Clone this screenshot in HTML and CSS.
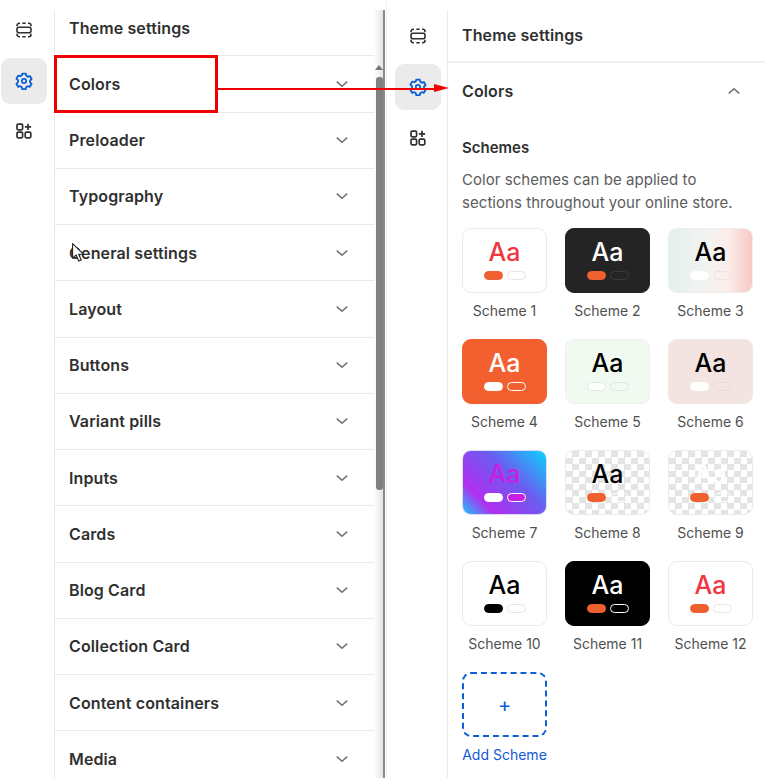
FILE: index.html
```html
<!DOCTYPE html>
<html lang="en">
<head>
    <meta charset="UTF-8">
    <meta name="viewport" content="width=device-width, initial-scale=1.0">
    <title>Theme settings</title>
    <link rel="stylesheet" href="styles.css">
</head>
<body>
    <svg class="defs" width="0" height="0">
        <symbol id="i-sections" viewBox="0 0 20 20">
            <rect x="3" y="7.2" width="14" height="5.6" rx="2" fill="none" stroke="currentColor" stroke-width="1.6"/>
            <path d="M3 6.2V5.5A2.2 2.2 0 0 1 5.2 3.3H6M8.3 3.3h3.4M14 3.3h.8A2.2 2.2 0 0 1 17 5.5v.7M3 13.8v.7a2.2 2.2 0 0 0 2.2 2.2H6M8.3 16.7h3.4M14 16.7h.8a2.2 2.2 0 0 0 2.2-2.2v-.7" fill="none" stroke="currentColor" stroke-width="1.6"/>
        </symbol>
        <symbol id="i-gear" viewBox="0 0 20 20">
            <circle cx="10" cy="10" r="2.2" fill="none" stroke="currentColor" stroke-width="1.7"/>
            <path d="M8.3 2.6h3.4l.6 2.2 1.4.8 2.2-.6 1.7 3-1.6 1.6v1.6l1.6 1.6-1.7 3-2.2-.6-1.4.8-.6 2.2H8.3l-.6-2.2-1.4-.8-2.2.6-1.7-3 1.6-1.6V9.2L2.4 7.6l1.7-3 2.2.6 1.4-.8z" fill="none" stroke="currentColor" stroke-width="1.8" stroke-linejoin="round"/>
        </symbol>
        <symbol id="i-apps" viewBox="0 0 20 20">
            <rect x="3" y="3.2" width="5.6" height="5.6" rx="1.2" fill="none" stroke="currentColor" stroke-width="1.7"/>
            <rect x="3" y="11.2" width="5.6" height="5.6" rx="1.2" fill="none" stroke="currentColor" stroke-width="1.7"/>
            <rect x="11.2" y="11.2" width="5.6" height="5.6" rx="1.2" fill="none" stroke="currentColor" stroke-width="1.7"/>
            <path d="M14 2.8v6.2M10.9 5.9h6.2" fill="none" stroke="currentColor" stroke-width="1.7"/>
        </symbol>
        <symbol id="i-down" viewBox="0 0 12 6">
            <path d="M.8.6 6 5.2 11.2.6" fill="none" stroke="currentColor" stroke-width="1.5"/>
        </symbol>
    </svg>

    <div class="shot">
        <section class="panel panel-left">
            <nav class="rail">
                <span class="rail-btn"><svg class="rail-icon"><use href="#i-sections"/></svg></span>
                <span class="rail-btn active"><svg class="rail-icon"><use href="#i-gear"/></svg></span>
                <span class="rail-btn"><svg class="rail-icon"><use href="#i-apps"/></svg></span>
            </nav>
            <div class="list">
                <h2 class="list-title">Theme settings</h2>
                <div class="row"><span>Colors</span><svg class="chev"><use href="#i-down"/></svg></div>
                <div class="row"><span>Preloader</span><svg class="chev"><use href="#i-down"/></svg></div>
                <div class="row"><span>Typography</span><svg class="chev"><use href="#i-down"/></svg></div>
                <div class="row"><span>General settings</span><svg class="chev"><use href="#i-down"/></svg></div>
                <div class="row"><span>Layout</span><svg class="chev"><use href="#i-down"/></svg></div>
                <div class="row"><span>Buttons</span><svg class="chev"><use href="#i-down"/></svg></div>
                <div class="row"><span>Variant pills</span><svg class="chev"><use href="#i-down"/></svg></div>
                <div class="row"><span>Inputs</span><svg class="chev"><use href="#i-down"/></svg></div>
                <div class="row"><span>Cards</span><svg class="chev"><use href="#i-down"/></svg></div>
                <div class="row"><span>Blog Card</span><svg class="chev"><use href="#i-down"/></svg></div>
                <div class="row"><span>Collection Card</span><svg class="chev"><use href="#i-down"/></svg></div>
                <div class="row"><span>Content containers</span><svg class="chev"><use href="#i-down"/></svg></div>
                <div class="row"><span>Media</span><svg class="chev"><use href="#i-down"/></svg></div>
            </div>
            <div class="scrollbar">
                <span class="scroll-arrow"></span>
                <span class="scroll-thumb"></span>
            </div>
        </section>

        <section class="panel panel-right">
            <nav class="rail">
                <span class="rail-btn"><svg class="rail-icon"><use href="#i-sections"/></svg></span>
                <span class="rail-btn active"><svg class="rail-icon"><use href="#i-gear"/></svg></span>
                <span class="rail-btn"><svg class="rail-icon"><use href="#i-apps"/></svg></span>
            </nav>
            <div class="detail">
                <h2 class="detail-title">Theme settings</h2>
                <div class="detail-head"><span>Colors</span><svg class="chev up"><use href="#i-down"/></svg></div>
                <div class="detail-body">
                    <h3 class="schemes-title">Schemes</h3>
                    <p class="schemes-text">Color schemes can be applied to sections throughout your online store.</p>
                    <div class="schemes">
                        <div class="scheme"><div class="swatch s1"><b>Aa</b><i class="pills"><u></u><u></u></i></div><span>Scheme 1</span></div>
                        <div class="scheme"><div class="swatch s2"><b>Aa</b><i class="pills"><u></u><u></u></i></div><span>Scheme 2</span></div>
                        <div class="scheme"><div class="swatch s3"><b>Aa</b><i class="pills"><u></u><u></u></i></div><span>Scheme 3</span></div>
                        <div class="scheme"><div class="swatch s4"><b>Aa</b><i class="pills"><u></u><u></u></i></div><span>Scheme 4</span></div>
                        <div class="scheme"><div class="swatch s5"><b>Aa</b><i class="pills"><u></u><u></u></i></div><span>Scheme 5</span></div>
                        <div class="scheme"><div class="swatch s6"><b>Aa</b><i class="pills"><u></u><u></u></i></div><span>Scheme 6</span></div>
                        <div class="scheme"><div class="swatch s7"><b>Aa</b><i class="pills"><u></u><u></u></i></div><span>Scheme 7</span></div>
                        <div class="scheme"><div class="swatch s8"><b>Aa</b><i class="pills"><u></u><u></u></i></div><span>Scheme 8</span></div>
                        <div class="scheme"><div class="swatch s9"><b>Aa</b><i class="pills"><u></u><u></u></i></div><span>Scheme 9</span></div>
                        <div class="scheme"><div class="swatch s10"><b>Aa</b><i class="pills"><u></u><u></u></i></div><span>Scheme 10</span></div>
                        <div class="scheme"><div class="swatch s11"><b>Aa</b><i class="pills"><u></u><u></u></i></div><span>Scheme 11</span></div>
                        <div class="scheme"><div class="swatch s12"><b>Aa</b><i class="pills"><u></u><u></u></i></div><span>Scheme 12</span></div>
                        <div class="scheme add"><div class="swatch add-box">+</div><span>Add Scheme</span></div>
                    </div>
                </div>
            </div>
        </section>

        <!-- annotation drawn over the screenshot -->
        <div class="callout"></div>
        <svg class="arrow" width="232" height="14" viewBox="0 0 232 14">
            <path d="M0 8H216" stroke="#f00000" stroke-width="2"/>
            <path d="M216 3l15 4-15 4z" fill="#f00000"/>
        </svg>
        <svg class="cursor" width="14" height="20" viewBox="0 0 14 20">
            <path d="M.6.6v14.6l3.6-3.2 2.5 6 2.5-1-2.5-5.8h4.8z" fill="#fff" stroke="#222" stroke-width="1.1" stroke-linejoin="round"/>
        </svg>
    </div>
</body>
</html>
```

FILE: styles.css
```css
* { box-sizing: border-box; }
body { margin: 0; background: #fff; font-family: Inter, "Liberation Sans", sans-serif; color: #303030; }
.defs { position: absolute; }
.shot { position: relative; display: flex; width: 780px; height: 784px; overflow: hidden; }

.panel { display: flex; height: 778px; overflow: hidden; }
.panel-left { width: 385px; }
.panel-right { width: 379px; margin-left: 1px; padding-top: 10px; border-left: 1px solid #f1f1f1; }

.rail { display: flex; flex-direction: column; gap: 4.6px; flex: none; border-right: 1px solid #ebebeb; }
.panel-left .rail { width: 55px; margin-top: 10px; padding: 0 0 0 1px; }
.panel-right .rail { width: 61px; padding: 3px 0 0 8px; gap: 5px; }
.rail-btn { display: flex; align-items: center; justify-content: center; width: 46px; height: 46px; border-radius: 9px; color: #303030; }
.panel-left .rail-btn:first-child { margin-top: -3px; }
.rail-btn.active { background: #ebebeb; color: #0a5fd6; }
.rail-icon { width: 20px; height: 20px; }

.list { width: 319px; flex: none; }
.list-title { margin: 0; height: 56.3px; padding-top: 18px; font-size: 16px; line-height: 20px; font-weight: 600; padding-left: 14px; border-bottom: 1px solid #ebebeb; letter-spacing: .12px; }
.row { display: flex; align-items: center; justify-content: space-between; height: 56.25px; padding: 0 26px 0 14px; border-bottom: 1px solid #ebebeb; font-size: 16px; font-weight: 600; letter-spacing: .12px; }
.chev { width: 12px; height: 6px; color: #6f6f6f; }
.chev.up { transform: rotate(180deg); }

.scrollbar { display: flex; flex-direction: column; align-items: flex-end; width: 11px; flex: none; margin-top: 10px; border-right: 2px solid #8a8a8a; background: linear-gradient(90deg, #fff, #e4e4e4); }
.scroll-arrow { width: 0; height: 0; margin: 55px 0 0; border: 4px solid transparent; border-top: 0; border-bottom: 5px solid #777; }
.scroll-thumb { width: 7px; height: 413px; margin-top: 7px; border-radius: 3px; background: #808080; }

.detail { width: 317px; flex: none; }
.detail-title { margin: 0; height: 53px; padding: 15px 0 0 14px; font-size: 16px; line-height: 20px; font-weight: 600; border-bottom: 2px solid #f1f1f1; letter-spacing: .12px; }
.detail-head { display: flex; align-items: center; justify-content: space-between; height: 55px; padding: 0 25px 0 14px; font-size: 16px; font-weight: 600; letter-spacing: .12px; }
.detail-body { padding: 20px 0 0 14px; }
.schemes-title { margin: 0; font-size: 15px; line-height: 20px; font-weight: 600; }
.schemes-text { margin: 10px 0 0; width: 290px; font-size: 15px; line-height: 23px; color: #5c5c5c; letter-spacing: .05px; }

.schemes { display: grid; grid-template-columns: repeat(3, 85px); gap: 21px 18px; margin-top: 14px; width: 291px; }
.scheme { display: flex; flex-direction: column; align-items: center; height: 90px; font-size: 14px; line-height: 18px; color: #4f4f4f; }
.scheme > span { margin-top: 9px; white-space: nowrap; }
.swatch { display: flex; flex-direction: column; align-items: center; width: 85px; height: 65px; flex: none; border: 1px solid #ebebeb; border-radius: 9px; background: #fff; color: #000; }
.swatch b { font-size: 25px; line-height: 30px; margin-top: 8px; font-weight: 450; }
.pills { display: flex; gap: 4px; margin-top: 4px; }
.pills u { display: block; width: 19px; height: 9px; border-radius: 5px; border: 1px solid #e6e6e6; background: #fff; }

.s1 b, .s12 b { color: #f0363f; }
.s1 u:first-child, .s2 u:first-child, .s8 u:first-child, .s9 u:first-child, .s11 u:first-child, .s12 u:first-child { background: #f0602f; border-color: #f0602f; }
.s2 { background: #242424; border-color: #242424; color: #fff; }
.s2 u:last-child { background: #242424; border-color: #3c3c3c; }
.s3 { background: linear-gradient(90deg, #e4f0ee, #f3f3f1 45%, #fbeeea 70%, #f8c9c3); border-color: #eee; }
.s3 u:first-child { border-color: #fff; }
.s3 u:last-child { background: transparent; border-color: #e6e6e6; }
.s4 { background: #f26030; border-color: #f26030; color: #fff; }
.s4 u:first-child { border-color: #fff; }
.s4 u:last-child { background: #f26030; border-color: #fff; }
.s5 { background: #f1faf0; border-color: #ecf2ea; }
.s5 u { background: #f1faf0; border-color: #e2e6e0; }
.s5 u:first-child { background: #fff; }
.s6 { background: #f3e3e1; border-color: #f1e6e4; }
.s6 u:first-child { border-color: #fff; }
.s6 u:last-child { background: #f3e3e1; border-color: #e8dcda; }
.s7 { background: linear-gradient(45deg, #17c8fb 0, #b02ff0 22%, #6a5ef0 60%, #09d3ff 100%); border-color: #d9dcf5; color: #c81fe0; }
.s7 u:first-child { border-color: #fff; }
.s7 u:last-child { background: #c81fe0; border-color: #fff; }
.s8, .s9 { background-color: #fff; background-image: conic-gradient(#e4e4e4 25%, #fff 0 50%, #e4e4e4 0 75%, #fff 0); background-size: 13px 13px; }
.s8 u:last-child, .s9 u:last-child { background: transparent; border-color: #fff; }
.s9 { color: #fff; }
.s10 u:first-child { background: #000; border-color: #000; }
.s11 { background: #000; border-color: #000; color: #fff; }
.s11 u:last-child { background: #000; border-color: #fff; }

.add { color: #1258d6; }
.add-box { justify-content: center; border: 2px dashed #0a5fd6; color: #0a5fd6; font-size: 20px; }

.callout { position: absolute; left: 54px; top: 55px; width: 164px; height: 58px; border: 3px solid #f00000; }
.arrow { position: absolute; left: 218px; top: 81px; }
.cursor { position: absolute; left: 72px; top: 243px; }
```
